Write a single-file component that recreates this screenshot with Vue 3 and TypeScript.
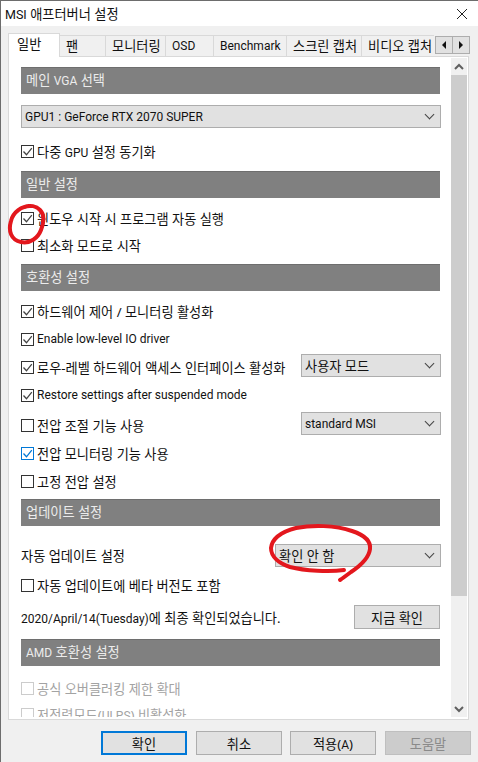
<script setup lang="ts">
interface Tab {
  label: string;
  width: number;
  active?: boolean;
  en?: boolean;
}

const tabs: Tab[] = [
  { label: "일반", width: 52, active: true },
  { label: "팬", width: 46 },
  { label: "모니터링", width: 60 },
  { label: "OSD", width: 48, en: true },
  { label: "Benchmark", width: 73, en: true },
  { label: "스크린 캡처", width: 75 },
  { label: "비디오 캡처", width: 72 },
];

const check = "M1.5 5.5L4.5 8.8L9.8 2.2";
</script>

<template>
  <div class="window">
    <header class="title">
      <span><span class="en">MSI</span> 애프터버너 설정</span>
      <svg class="close" width="12" height="12" viewBox="0 0 12 12">
        <path d="M1 1l10 10M11 1L1 11" stroke="#222" fill="none" />
      </svg>
    </header>

    <div class="tabs">
      <div
        v-for="tab in tabs"
        :key="tab.label"
        class="tab"
        :class="{ active: tab.active, en: tab.en }"
        :style="{ width: `${tab.width}px` }"
      >
        {{ tab.label }}
      </div>
      <div class="tab-arrows">
        <button class="arrow"><i class="tri left"></i></button>
        <button class="arrow"><i class="tri right"></i></button>
      </div>
    </div>

    <div class="panel">
      <div class="content">
        <div class="band first">메인 <span class="en">VGA</span> 선택</div>
        <div class="select wide mt11">
          <span class="en">GPU1 : GeForce RTX 2070 SUPER</span><i class="chev"></i>
        </div>
        <label class="row mt16"><span class="box"><svg viewBox="0 0 11 11"><path :d="check" /></svg></span><span>다중 <span class="en">GPU</span> 설정 동기화</span></label>

        <div class="band mt13">일반 설정</div>
        <label class="row mt13"><span class="box"><svg viewBox="0 0 11 11"><path :d="check" /></svg></span>윈도우 시작 시 프로그램 자동 실행</label>
        <label class="row mt13"><span class="box"></span>최소화 모드로 시작</label>

        <div class="band mt12">호환성 설정</div>
        <label class="row mt13"><span class="box"><svg viewBox="0 0 11 11"><path :d="check" /></svg></span>하드웨어 제어 / 모니터링 활성화</label>
        <label class="row mt14 en"><span class="box"><svg viewBox="0 0 11 11"><path :d="check" /></svg></span>Enable low-level IO driver</label>
        <div class="split mt8">
          <label class="row nudge"><span class="box"><svg viewBox="0 0 11 11"><path :d="check" /></svg></span>로우-레벨 하드웨어 액세스 인터페이스 활성화</label>
          <div class="select small"><span>사용자 모드</span><i class="chev"></i></div>
        </div>
        <label class="row mt11 en"><span class="box"><svg viewBox="0 0 11 11"><path :d="check" /></svg></span>Restore settings after suspended mode</label>
        <div class="split mt10">
          <label class="row nudge"><span class="box"></span>전압 조절 기능 사용</label>
          <div class="select small"><span class="en">standard MSI</span><i class="chev"></i></div>
        </div>
        <label class="row mt11"><span class="box blue"><svg viewBox="0 0 11 11"><path :d="check" /></svg></span>전압 모니터링 기능 사용</label>
        <label class="row mt14"><span class="box"></span>고정 전압 설정</label>

        <div class="band mt11">업데이트 설정</div>
        <div class="split mt18">
          <span class="plain">자동 업데이트 설정</span>
          <div class="select update"><span>확인 안 함</span><i class="chev"></i></div>
        </div>
        <label class="row mt11"><span class="box"></span>자동 업데이트에 베타 버전도 포함</label>
        <div class="split mt13">
          <span class="plain"><span class="en">2020/April/14(Tuesday)</span>에 최종 확인되었습니다.</span>
          <button class="btn now">지금 확인</button>
        </div>

        <div class="band mt10"><span class="en">AMD</span> 호환성 설정</div>
        <label class="row mt15 off"><span class="box"></span>공식 오버클러킹 제한 확대</label>
        <label class="row mt12 off"><span class="box"></span><span>저전력모드(<span class="en">ULPS</span>) 비활성화</span></label>
      </div>

      <div class="scrollbar">
        <svg class="sb-arrow" width="16" height="17" viewBox="0 0 16 17">
          <path d="M4 11l4-4 4 4" stroke="#606060" stroke-width="2" fill="none" />
        </svg>
        <div class="thumb"></div>
        <div class="track"></div>
        <svg class="sb-arrow" width="16" height="17" viewBox="0 0 16 17">
          <path d="M4 7l4 4 4-4" stroke="#606060" stroke-width="2" fill="none" />
        </svg>
      </div>
    </div>

    <footer class="footer">
      <button class="btn primary">확인</button>
      <button class="btn">취소</button>
      <button class="btn"><span>적용(<span class="en">A</span>)</span></button>
      <button class="btn disabled">도움말</button>
    </footer>

    <svg class="ink" width="478" height="762" viewBox="0 0 478 762">
      <path d="M30 206C22 206 13 212 11 221C8 231 11 240 21 242C30 244 38 238 41 230C44 222 45 215 40 210C36 206 30 205 25 207" />
      <path d="M344 570C330 572 305 571 290 567C278 563 271 556 271 548C272 539 281 532 296 528C312 525 335 525 352 531C364 535 371 541 370 549C369 558 360 566 351 572C347 575 343 578 340 580" />
    </svg>
  </div>
</template>

<style>
html,
body {
  margin: 0;
  background: #f0f0f0;
}
</style>

<style scoped>
.window {
  position: relative;
  box-sizing: border-box;
  display: flex;
  flex-direction: column;
  width: 478px;
  height: 762px;
  overflow: hidden;
  border-top: 1px solid #6d6d6d;
  border-left: 1px solid #6d6d6d;
  background: #f0f0f0;
  color: #111;
  font-family: "Noto Sans", "Noto Sans CJK KR", sans-serif;
  font-size: 13.2px;
}

.en {
  font-family: Roboto, "Noto Sans CJK KR", sans-serif;
  font-size: 12px;
}

.title {
  display: flex;
  align-items: center;
  justify-content: space-between;
  flex: none;
  height: 25px;
  padding: 0 9px 0 4px;
  background: #fff;
}

.title .en {
  font-size: 12.5px;
}

.close {
  margin-right: 1px;
}

.tabs {
  display: flex;
  flex: none;
  align-items: flex-end;
  position: relative;
  z-index: 1;
  height: 22px;
  margin-top: 8px;
  padding-left: 7px;
}

.tab {
  box-sizing: border-box;
  flex: none;
  height: 21px;
  padding-left: 6px;
  border: 1px solid #d9d9d9;
  border-left: 0;
  border-bottom: 0;
  background: #f0f0f0;
  line-height: 20px;
  white-space: nowrap;
  overflow: hidden;
}

.tab.active {
  height: 24px;
  margin-bottom: -1px;
  padding-left: 8px;
  border-left: 1px solid #d9d9d9;
  background: #fff;
  line-height: 20px;
}

.tab:nth-child(7) {
  border-right: 0;
}

.tab-arrows {
  display: flex;
  flex: none;
  align-self: flex-start;
  margin-left: 2px;
}

.arrow {
  display: flex;
  align-items: center;
  justify-content: center;
  box-sizing: border-box;
  width: 18px;
  height: 18px;
  margin: 2px 0 0 -1px;
  padding: 0;
  border: 1px solid #adadad;
  background: #e1e1e1;
}

.tri {
  width: 0;
  height: 0;
  border: 4px solid transparent;
}

.tri.left {
  margin-left: -4px;
  border-right-color: #111;
}

.tri.right {
  margin-right: -4px;
  border-left-color: #111;
}

.panel {
  display: flex;
  flex: none;
  box-sizing: border-box;
  width: 461px;
  height: 664px;
  margin-left: 7px;
  border: 1px solid #d9d9d9;
  background: #fff;
}

.content {
  flex: none;
  box-sizing: border-box;
  width: 442px;
  height: 660px;
  padding-left: 12px;
  overflow: hidden;
}

.band {
  box-sizing: border-box;
  width: 419px;
  height: 27px;
  padding-left: 5px;
  border-top: 1px solid #6e6e6e;
  background: #808080;
  color: #ececec;
  line-height: 25px;
}

.band.first {
  margin-top: 10px;
}

.select {
  display: flex;
  align-items: center;
  justify-content: space-between;
  box-sizing: border-box;
  height: 23px;
  padding: 0 5px 0 3px;
  border: 1px solid #adadad;
  background: #e1e1e1;
}

.select.wide {
  width: 420px;
}

.select.small {
  width: 140px;
  margin-right: -1px;
}

.select.update {
  width: 166px;
  margin-right: -1px;
}

.chev {
  width: 6px;
  height: 6px;
  margin: -4px 2px 0 0;
  border-right: 1px solid #444;
  border-bottom: 1px solid #444;
  transform: rotate(45deg);
}

.row {
  display: flex;
  align-items: center;
  gap: 3px;
  height: 14px;
  white-space: nowrap;
}

.row.nudge {
  margin-top: 3px;
}

.row.off {
  color: #a3a3a3;
}

.box {
  display: block;
  box-sizing: border-box;
  flex: none;
  width: 13px;
  height: 13px;
  border: 1px solid #333;
  background: #fff;
}

.box svg {
  display: block;
  width: 11px;
  height: 11px;
  fill: none;
  stroke: #444;
  stroke-width: 1.3;
}

.box.blue {
  border-color: #0078d7;
}

.box.blue svg {
  stroke: #0078d7;
}

.off .box {
  border-color: #ccc;
}

.split {
  display: flex;
  align-items: center;
  justify-content: space-between;
  width: 419px;
  white-space: nowrap;
}

.plain {
  display: block;
}

.btn {
  box-sizing: border-box;
  padding: 0;
  border: 1px solid #adadad;
  background: #e1e1e1;
  color: #111;
  font: inherit;
}

.now {
  width: 86px;
  height: 24px;
}

.scrollbar {
  display: flex;
  flex-direction: column;
  flex: none;
  width: 16px;
  height: 659px;
  margin-top: 1px;
  background: #f0f0f0;
}

.sb-arrow {
  display: block;
  flex: none;
}

.thumb {
  flex: none;
  height: 521px;
  background: #cdcdcd;
}

.track {
  flex: 1;
}

.footer {
  display: flex;
  flex: none;
  gap: 9px;
  justify-content: flex-end;
  padding: 11px 7px 0 0;
}

.footer .btn {
  width: 86px;
  height: 24px;
}

.footer .btn:nth-child(2) {
  margin-right: -1px;
}

.footer .primary {
  border: 2px solid #0078d7;
}

.footer .disabled {
  border-color: #bfbfbf;
  background: #ccc;
  color: #8a8a8a;
}

.ink {
  position: absolute;
  top: -1px;
  left: -1px;
  fill: none;
  stroke: #e3171d;
  stroke-width: 4;
  stroke-linecap: round;
  pointer-events: none;
}

.mt8 { margin-top: 8px; }
.mt10 { margin-top: 10px; }
.mt11 { margin-top: 11px; }
.mt12 { margin-top: 12px; }
.mt13 { margin-top: 13px; }
.mt14 { margin-top: 14px; }
.mt15 { margin-top: 15px; }
.mt16 { margin-top: 16px; }
.mt18 { margin-top: 18px; }
</style>
